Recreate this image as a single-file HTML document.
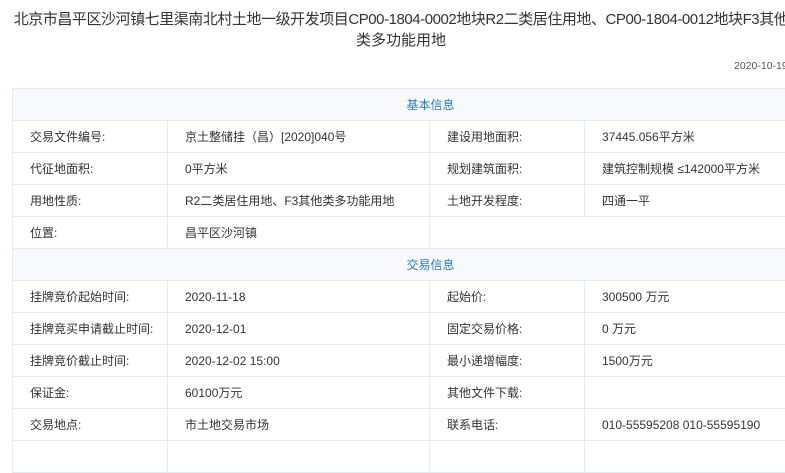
<!DOCTYPE html>
<html><head><meta charset="utf-8"><style>
body{margin:0;width:785px;height:444px;overflow:hidden;background:#fff;font-family:"Liberation Sans","Noto Sans CJK SC",sans-serif;color:#333}
.t{position:absolute;left:0;top:9px;width:802px;text-align:center;font-size:15px;line-height:21px;color:#333;white-space:nowrap}
.t span{letter-spacing:-0.45px}
.d{position:absolute;left:734px;top:60px;font-size:10.5px;color:#555;white-space:nowrap}
table{position:absolute;left:12px;top:88px;border-collapse:collapse;table-layout:fixed;width:836px}
td{border:1px solid #e6eaef;height:31px;font-size:12px;line-height:16px;padding:0 0 0 17px;white-space:nowrap;vertical-align:middle}
td.h{background:#f7f9fc;color:#2a7bc0;text-align:center;padding:0;font-size:12px}
</style></head><body>
<div class="t"><span>北京市昌平区沙河镇七里渠南北村土地一级开发项目CP00-1804-0002地块R2二类居住用地、CP00-1804-0012地块F3其他</span><br>类多功能用地</div>
<div class="d">2020-10-19</div>
<table>
<colgroup><col style="width:155px"><col style="width:262px"><col style="width:155px"><col style="width:264px"></colgroup>
<tr><td class="h" colspan="4">基本信息</td></tr>
<tr><td>交易文件编号:</td><td>京土整储挂（昌）[2020]040号</td><td>建设用地面积:</td><td>37445.056平方米</td></tr>
<tr><td>代征地面积:</td><td>0平方米</td><td>规划建筑面积:</td><td>建筑控制规模 ≤142000平方米</td></tr>
<tr><td>用地性质:</td><td>R2二类居住用地、F3其他类多功能用地</td><td>土地开发程度:</td><td>四通一平</td></tr>
<tr><td>位置:</td><td>昌平区沙河镇</td><td colspan="2"></td></tr>
<tr><td class="h" colspan="4">交易信息</td></tr>
<tr><td>挂牌竞价起始时间:</td><td>2020-11-18</td><td>起始价:</td><td>300500 万元</td></tr>
<tr><td>挂牌竞买申请截止时间:</td><td>2020-12-01</td><td>固定交易价格:</td><td>0 万元</td></tr>
<tr><td>挂牌竞价截止时间:</td><td>2020-12-02 15:00</td><td>最小递增幅度:</td><td>1500万元</td></tr>
<tr><td>保证金:</td><td>60100万元</td><td>其他文件下载:</td><td></td></tr>
<tr><td>交易地点:</td><td>市土地交易市场</td><td>联系电话:</td><td>010-55595208 010-55595190</td></tr>
<tr><td></td><td></td><td></td><td></td></tr>
</table>
</body></html>
